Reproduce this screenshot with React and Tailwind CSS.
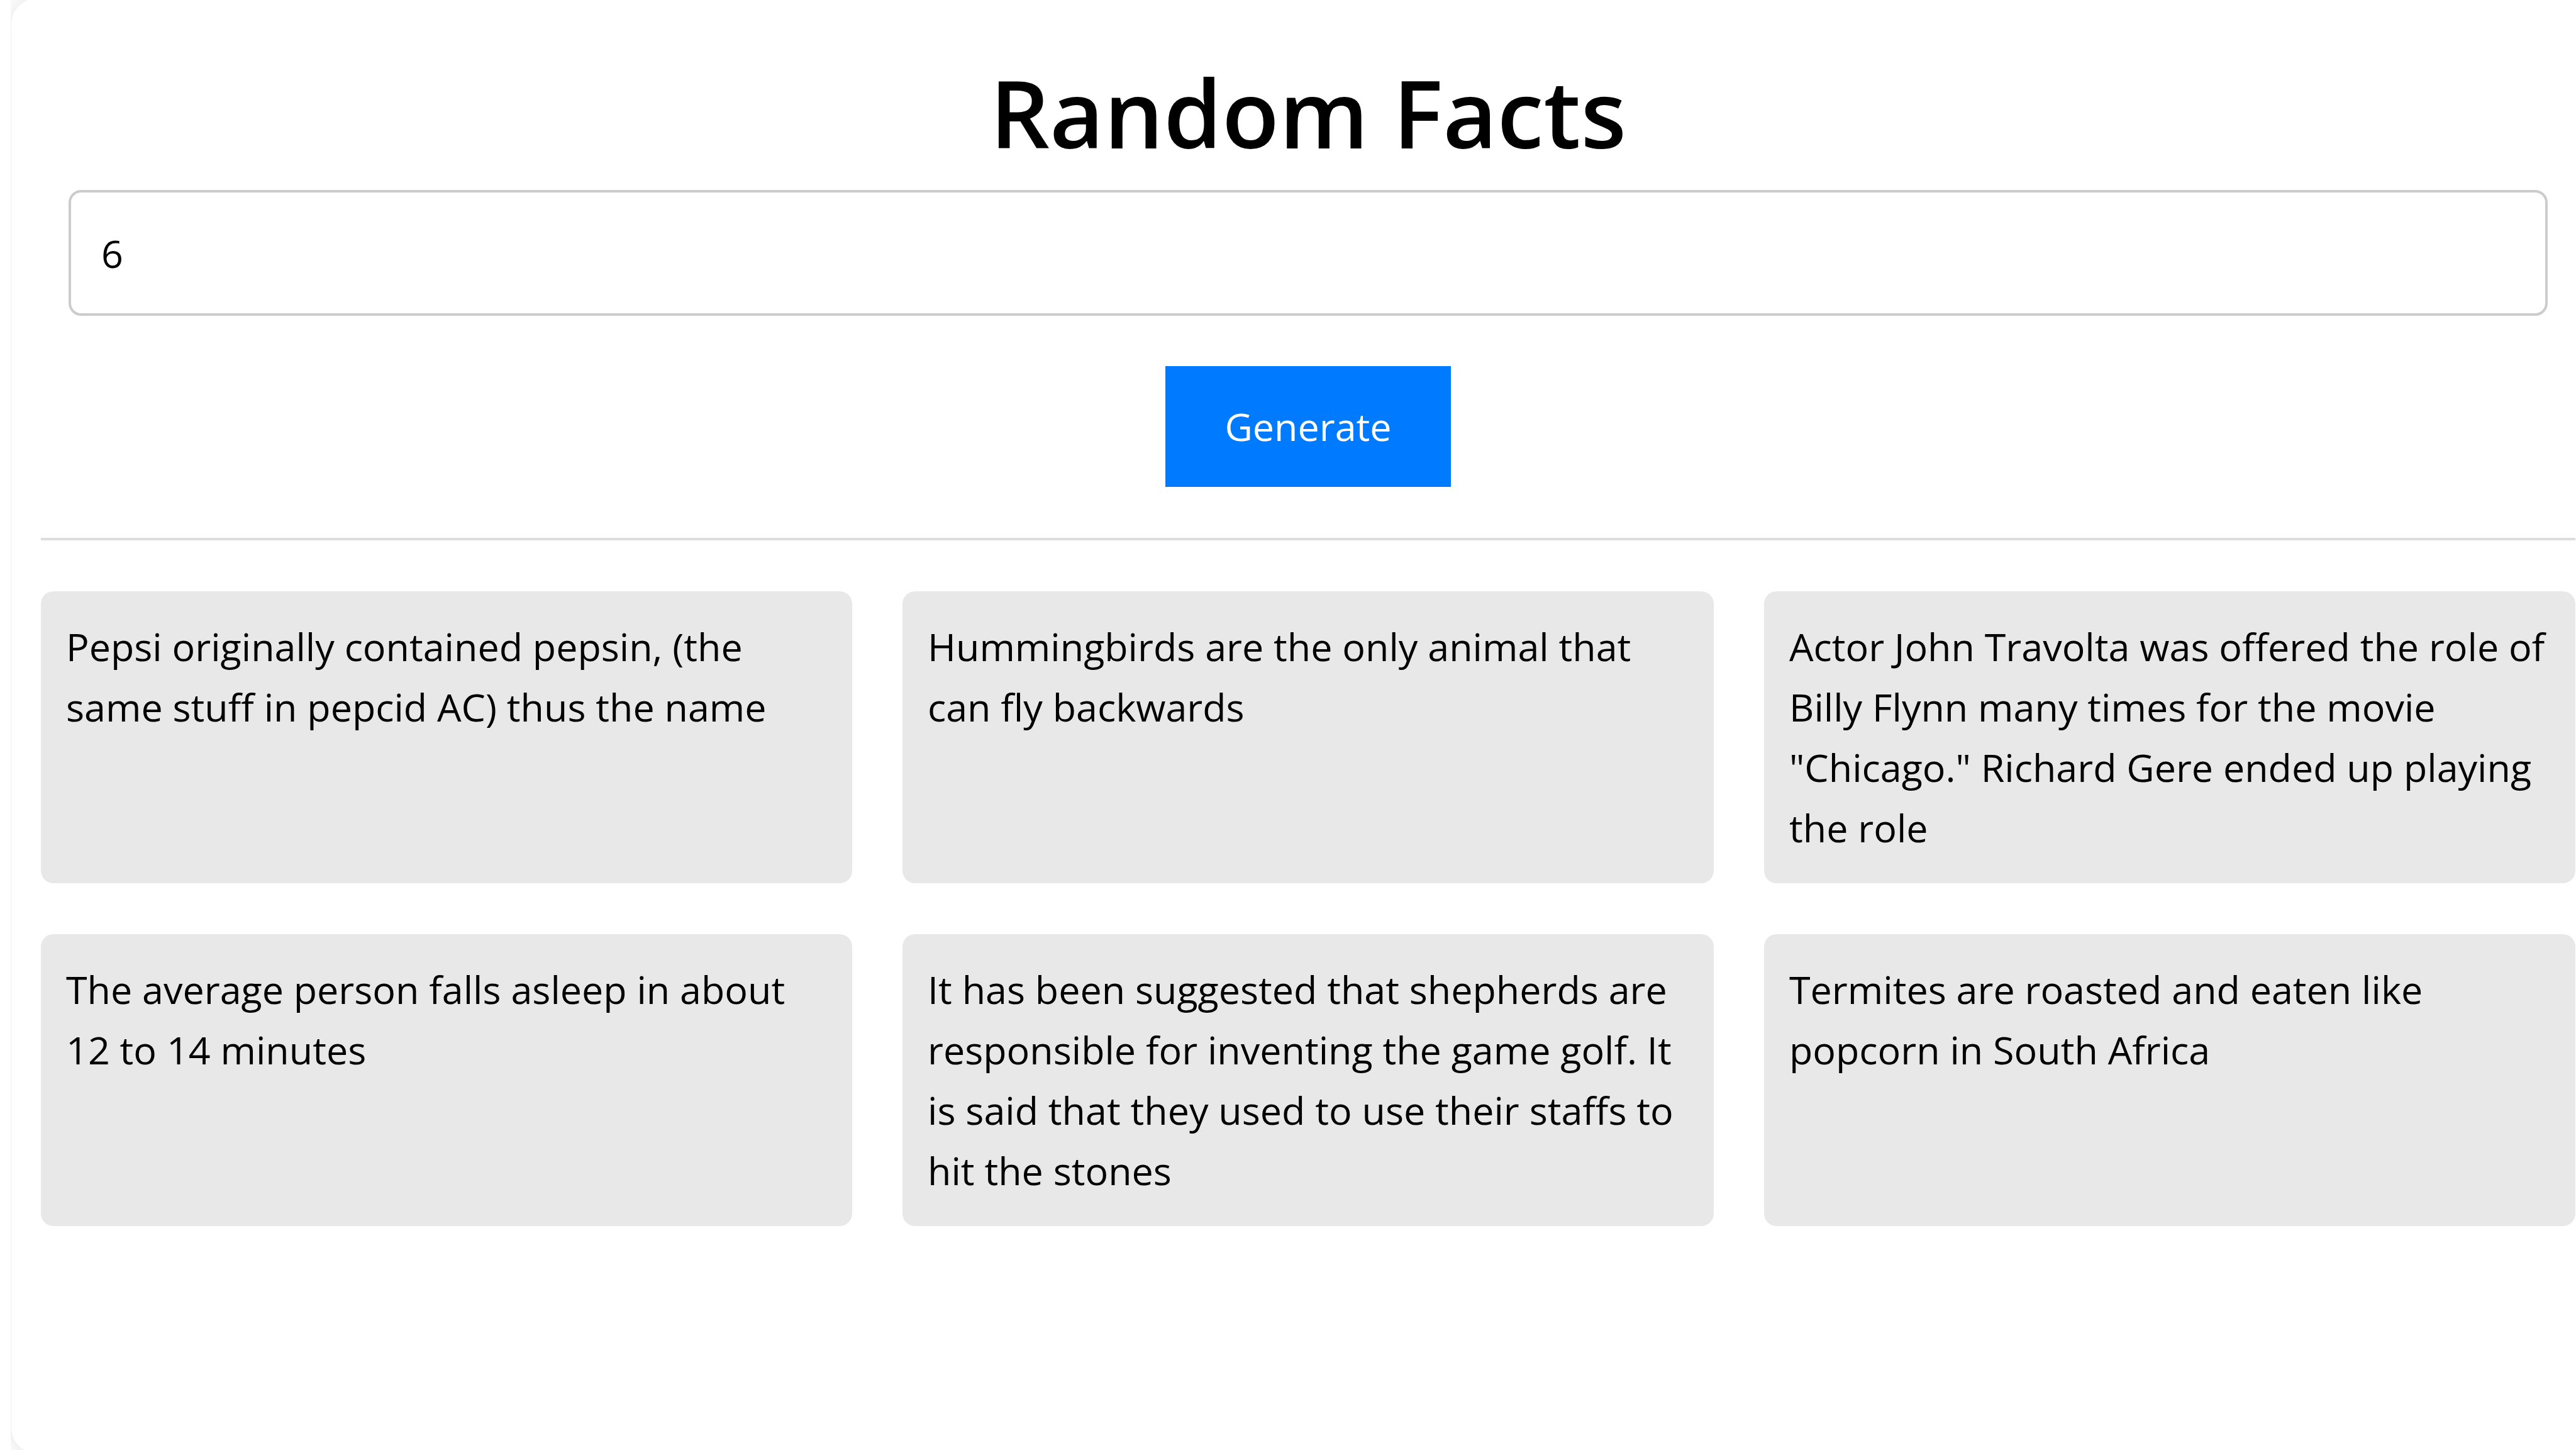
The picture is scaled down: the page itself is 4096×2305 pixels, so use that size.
import { useState } from "react";

const FACTS = [
  "Pepsi originally contained pepsin, (the same stuff in pepcid AC) thus the name",
  "Hummingbirds are the only animal that can fly backwards",
  "Actor John Travolta was offered the role of Billy Flynn many times for the movie \"Chicago.\" Richard Gere ended up playing the role",
  "The average person falls asleep in about 12 to 14 minutes",
  "It has been suggested that shepherds are responsible for inventing the game golf. It is said that they used to use their staffs to hit the stones",
  "Termites are roasted and eaten like popcorn in South Africa",
];

function FactCard({ text }) {
  return (
    <li className="rounded-[20px] bg-[#e8e8e8] p-10">
      <p>{text}</p>
    </li>
  );
}

export default function App() {
  const [count, setCount] = useState("6");

  return (
    <div className="h-screen overflow-hidden bg-white pl-[17px] font-['Open_Sans',sans-serif] text-[61px] leading-[96px] text-black">
      <div className="h-full overflow-hidden pl-px">
        <main className="-mt-0.5 min-h-[calc(100vh+7px)] rounded-[40px] rounded-r-none bg-white pt-[85px] pr-px pl-[47px] shadow-[0_0_40px_rgba(0,0,0,0.13)]">
          <form
            className="flex flex-col items-center px-11"
            onSubmit={(e) => e.preventDefault()}
          >
            <h1 className="text-[149px] leading-[192px] font-semibold">Random Facts</h1>
            <input
              type="number"
              aria-label="Number of facts"
              value={count}
              onChange={(e) => setCount(e.target.value)}
              className="mt-[27px] h-[200px] w-full rounded-[20px] border-4 border-[#ccc] bg-transparent px-12 outline-none"
            />
            <button type="submit" className="mt-20 bg-[#007bff] px-[94px] py-12 text-white">
              Generate
            </button>
          </form>
          <hr className="my-[81px] border-t-4 border-[#ddd]" />
          <ul className="grid grid-cols-3 gap-x-20 gap-y-[81px]">
            {FACTS.slice(0, Number(count)).map((fact) => (
              <FactCard key={fact} text={fact} />
            ))}
          </ul>
        </main>
      </div>
    </div>
  );
}
